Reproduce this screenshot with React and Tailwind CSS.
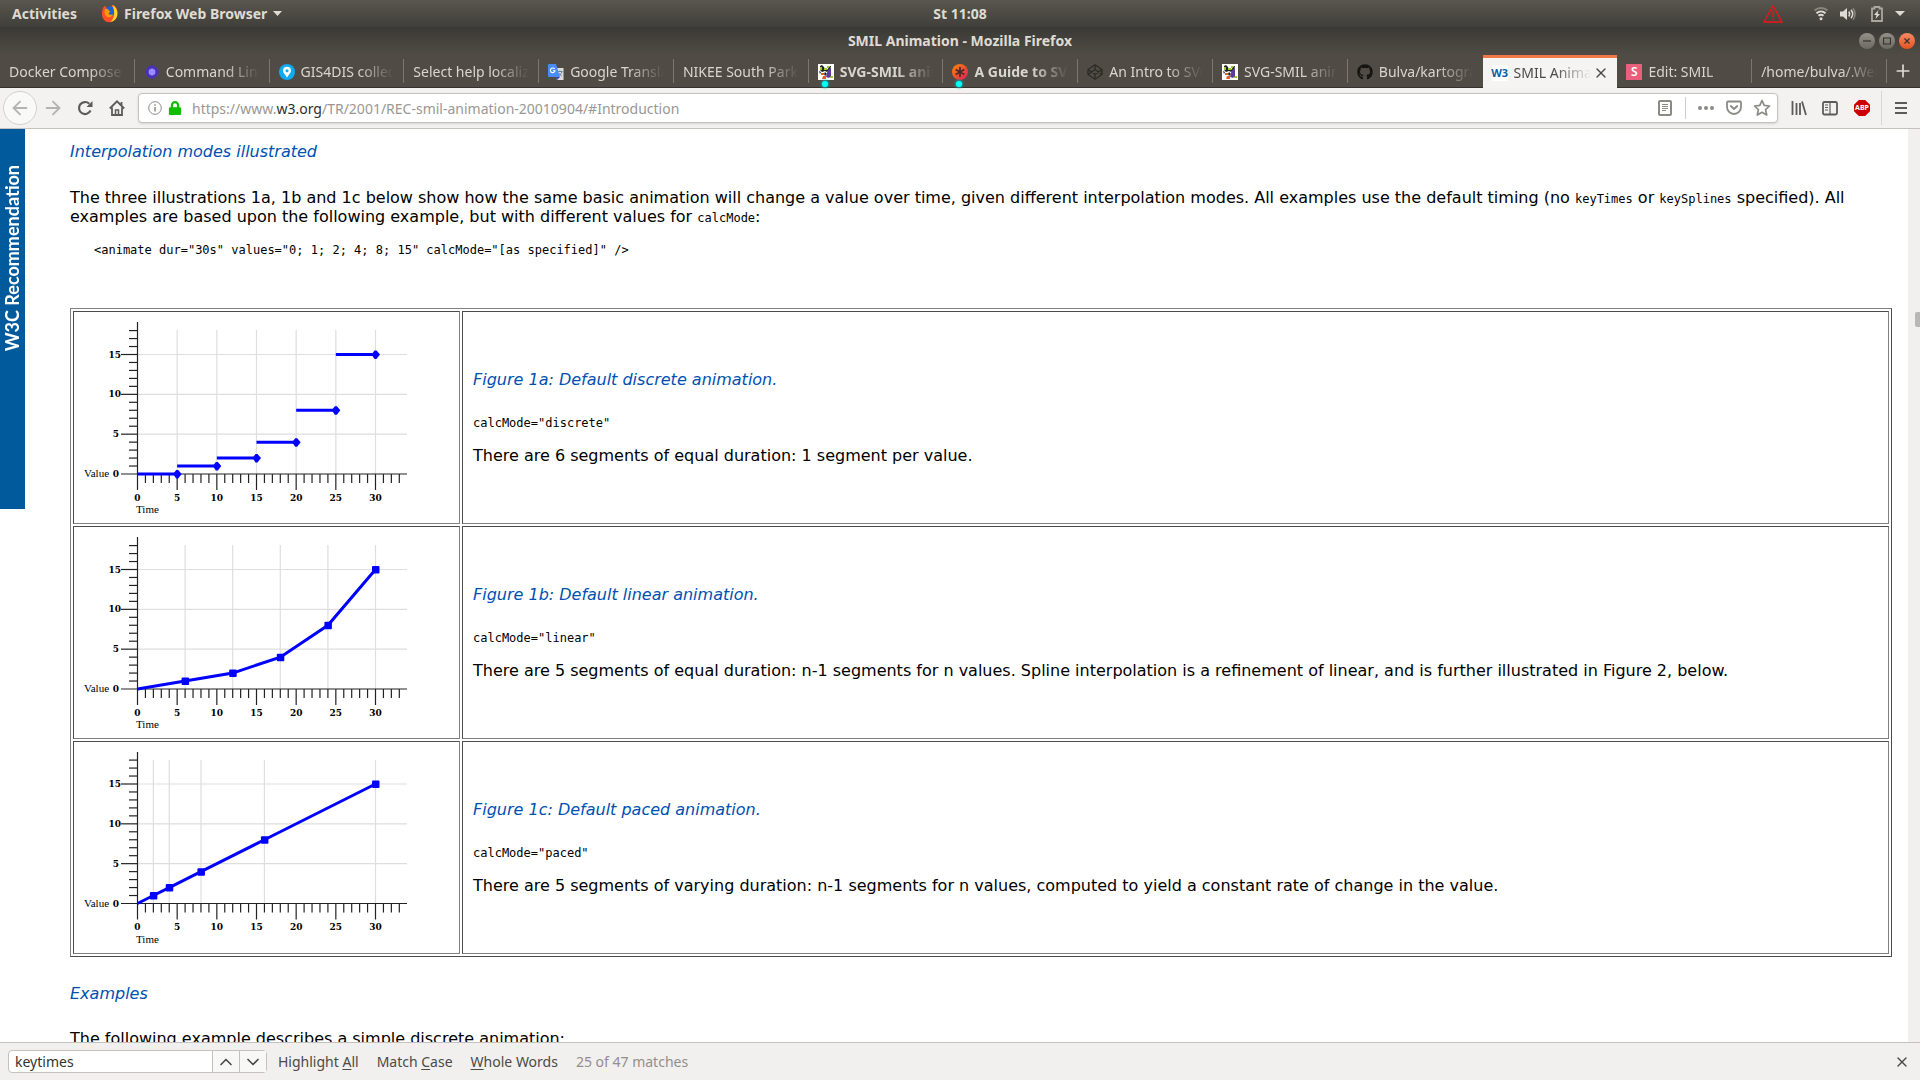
import { ArrowLeft, ArrowRight, ChevronDown, ChevronUp, Plus, X } from 'lucide-react'
import { FaGithub, FaLock } from 'react-icons/fa'

const TABS = [
  { title: 'Docker Compose up' },
  { title: 'Command Line', icon: 'hex' },
  { title: 'GIS4DIS collection', icon: 'pin' },
  { title: 'Select help localization' },
  { title: 'Google Translate', icon: 'translate' },
  { title: 'NIKEE South Park' },
  { title: 'SVG-SMIL animation', icon: 'parrot', unread: true },
  { title: 'A Guide to SVG', icon: 'star', unread: true },
  { title: 'An Intro to SVG', icon: 'codepen' },
  { title: 'SVG-SMIL animation', icon: 'parrot' },
  { title: 'Bulva/kartografie', icon: 'github' },
  { title: 'SMIL Animation', icon: 'w3', active: true },
  { title: 'Edit: SMIL', icon: 's' },
  { title: '/home/bulva/.WebStorm' },
]

const FIGURES = [
  {
    title: 'Figure 1a: Default discrete animation.',
    code: 'calcMode="discrete"',
    text: 'There are 6 segments of equal duration: 1 segment per value.',
    mode: 'discrete',
    grid: [5, 10, 15, 20, 25, 30],
    points: [[5, 0], [10, 1], [15, 2], [20, 4], [25, 8], [30, 15]],
  },
  {
    title: 'Figure 1b: Default linear animation.',
    code: 'calcMode="linear"',
    text: 'There are 5 segments of equal duration: n-1 segments for n values. Spline interpolation is a refinement of linear, and is further illustrated in Figure 2, below.',
    mode: 'linear',
    grid: [6, 12, 18, 24, 30],
    points: [[6, 1], [12, 2], [18, 4], [24, 8], [30, 15]],
  },
  {
    title: 'Figure 1c: Default paced animation.',
    code: 'calcMode="paced"',
    text: 'There are 5 segments of varying duration: n-1 segments for n values, computed to yield a constant rate of change in the value.',
    mode: 'paced',
    grid: [2, 4, 8, 16, 30],
    points: [[2, 1], [4, 2], [8, 4], [16, 8], [30, 15]],
  },
]

const range = (n) => Array.from({ length: n }, (_, i) => i)

const FirefoxLogo = () => (
  <svg width="17" height="19" viewBox="0 0 16 18">
    <path d="M1 7C1.500 4 2.500 2.500 4 1.500 4 3 5 3.500 6 4l6-3c2.500 2 3.700 5 3.500 8.500C15.200 14 12 17.200 8 17.200 3 17.200 0 12.500 1 7z" fill="#ff4f2a" />
    <circle cx="8.600" cy="7" r="4.800" fill="#1f5fd0" />
    <path d="M4 4.500c2 0 3 .6 3.500 1.800L9 7 7 9c1 1.500 3 1.500 4.500.5-1 2.500-3 3.500-5 3C3.500 11.500 2.500 7.500 4 4.500z" fill="#ff9a00" />
    <path d="M10.500 1c3.500 1.500 5.200 4.500 5 8.500-.3 4-2.800 6.700-6.500 7.500C13 13.500 13.500 6.500 10.500 1z" fill="#ffd42a" />
  </svg>
)

const TabIcon = ({ name }) => {
  switch (name) {
    case 'hex':
      return (
        <svg className="shrink-0" width="16" height="16" viewBox="0 0 16 16">
          <path d="M8 1l4.800 2.200L15 8l-2.200 4.800L8 15l-4.800-2.200L1 8l2.200-4.800z" fill="#4a32b4" />
          <path d="M8 4.300l3.200 1.800v3.800L8 11.700 4.800 9.900V6.100z" fill="#9b8cff" />
        </svg>
      )
    case 'pin':
      return (
        <svg className="shrink-0" width="16" height="16" viewBox="0 0 16 16">
          <circle cx="8" cy="8" r="8" fill="#0dabf2" />
          <path d="M8 2.800a4 4 0 0 1 4 4c0 2.400-2.700 4.200-4 7-1.300-2.800-4-4.600-4-7a4 4 0 0 1 4-4z" fill="#fff" />
          <circle cx="8" cy="6.700" r="1.500" fill="#0dabf2" />
        </svg>
      )
    case 'translate':
      return (
        <svg className="shrink-0" width="16" height="16" viewBox="0 0 16 16">
          <path d="M6 4h9.500v12H9z" fill="#dcdcdc" />
          <path d="M9.500 7.500h5M12 6.500v1M14 7.500c-.5 2-2 3.500-3.500 4.500M10.800 9c.7 1.300 1.800 2.300 3 3" fill="none" stroke="#607d8b" strokeWidth=".9" />
          <path d="M1 0h7l4 13H1a1 1 0 0 1-1-1V1a1 1 0 0 1 1-1z" fill="#4b8bf5" />
          <path d="M8 13h4l-3 3z" fill="#3440c0" />
          <path d="M6.600 5A2.300 2.300 0 1 0 7 6.700H4.900" fill="none" stroke="#fff" strokeWidth="1.100" />
        </svg>
      )
    case 'parrot':
      return (
        <svg className="shrink-0" width="16" height="16" viewBox="0 0 16 16">
          <rect width="16" height="16" fill="#fff" />
          <path d="M2 2l2-1 2 2 1 3 2 0 3-4h1l-1 4-3 2-2-1-3 1-2-2z" fill="#222" />
          <path d="M2 3h2v3H2zM6 4h3v2H6zM12 12h3v2h-3zM9 2h2v2H9z" fill="#9c3" />
          <path d="M3 9h3v2H3zM5 12h3v3H4z" fill="#e8601c" />
          <path d="M10 6l3-2v8l-2 2-3-1 1-4z" fill="#5b3c9c" />
          <path d="M7 8l2 2-2 2-1-2zM1 7l2 1-1 2z" fill="#222" />
        </svg>
      )
    case 'star':
      return (
        <svg className="shrink-0" width="16" height="16" viewBox="0 0 16 16">
          <defs>
            <linearGradient id="guide" x1="0" y1="0" x2="1" y2="1">
              <stop offset="0" stopColor="#ff8a00" />
              <stop offset="1" stopColor="#da1b60" />
            </linearGradient>
          </defs>
          <circle cx="8" cy="8" r="8" fill="url(#guide)" />
          <path d="M8 3v10M3.700 5.500l8.600 5M12.300 5.500l-8.600 5" stroke="#4a2a2a" strokeWidth="1.700" />
        </svg>
      )
    case 'codepen':
      return (
        <svg className="shrink-0" width="16" height="16" viewBox="0 0 16 16" fill="none" stroke="#2b2a27" strokeWidth="1.300">
          <path d="M8 .8l7 4.700v5L8 15.200l-7-4.700v-5zM8 .8v4.700M8 10.500v4.700M1 5.500l7 5 7-5M1 10.500l7-5 7 5" />
        </svg>
      )
    case 'github':
      return <FaGithub size={16} color="#161514" className="shrink-0" />
    case 'w3':
      return (
        <span className="flex h-4 w-4 shrink-0 items-center justify-center bg-white font-['Open_Sans'] text-[11px] font-bold leading-4 text-[#0b5fa5]">
          W3
        </span>
      )
    case 's':
      return (
        <span className="flex h-4 w-4 shrink-0 items-center justify-center bg-[#e8607c] text-xs font-semibold leading-4 text-white">
          S
        </span>
      )
    default:
      return null
  }
}

const Tab = ({ title, icon, active, unread, divider }) => (
  <div
    className={`relative flex min-w-0 flex-1 basis-0 items-center gap-1.5 pl-[9px] pr-2.5 ${
      active
        ? 'border-t-[3px] border-[#f07746] bg-[#f5f4f2] text-[#4b4a46]'
        : 'border-b border-[#33322e] pt-0.5 text-[#d9d6ce]'
    }`}
  >
    <TabIcon name={icon} />
    <button
      className={`min-w-0 flex-1 overflow-hidden whitespace-nowrap text-left [mask-image:linear-gradient(to_right,black_calc(100%-36px),transparent)] ${
        unread ? 'font-bold' : ''
      }`}
    >
      {title}
    </button>
    {active && (
      <button aria-label="Close tab" className="-mr-0.5 -ml-1">
        <X size={16} strokeWidth={2} />
      </button>
    )}
    {unread && (
      <span className="absolute bottom-0 left-[13px] h-1.5 w-1.5 rounded-full bg-[#0ff] shadow-[0_0_2px_1px_#1a9a9a]" />
    )}
    {divider && <span className="absolute right-0 top-1 h-6 w-px bg-[#7a776f]" />}
  </div>
)

const SystemBar = () => (
  <header className="grid h-[27px] grid-cols-3 items-center bg-linear-to-b from-[#5a564f] to-[#403f3a] px-3 font-bold text-[#dfdbd2]">
    <div className="flex items-center gap-6">
      <button>Activities</button>
      <button className="flex items-center gap-1.5">
        <FirefoxLogo />
        Firefox Web Browser
        <svg width="9" height="5" viewBox="0 0 9 5">
          <path d="M0 0h9L4.500 5z" fill="currentColor" />
        </svg>
      </button>
    </div>
    <div className="text-center">St 11:08</div>
    <div className="flex items-center justify-end">
      <svg className="mr-[30px]" width="20" height="18" viewBox="0 0 20 18" fill="none" stroke="#f01414" strokeWidth="1.300">
        <path d="M10 1l9 16H1zM10 6v6M10 13.500v1.500" />
      </svg>
      <svg className="mr-[11px]" width="16" height="15" viewBox="0 0 16 15" fill="none" stroke="#dfdbd2" strokeWidth="2">
        <path d="M1.500 4.500C5 1.200 11 1.200 14.500 4.500" opacity=".4" />
        <path d="M3.500 7.200c2.600-2.400 6.400-2.400 9 0M5.500 9.800c1.500-1.300 3.500-1.300 5 0" />
        <circle cx="8" cy="12.800" r="1.500" fill="#dfdbd2" stroke="none" />
      </svg>
      <svg className="mr-[15px]" width="16" height="14" viewBox="0 0 16 14" fill="none" stroke="#dfdbd2" strokeWidth="1.500">
        <path d="M0 4.500h3L7 1v12L3 9.500H0z" fill="#dfdbd2" stroke="none" />
        <path d="M8.800 4.500c1 1.500 1 3.500 0 5M11 2.800c2 2.500 2 6 0 8.400" />
        <path d="M13 1.300c2.500 3.500 2.500 8 0 11.400" opacity=".4" />
      </svg>
      <svg className="mr-3" width="12" height="16" viewBox="0 0 12 16">
        <path d="M1 2.500h2.500V1h5v1.500H11V15H1z" fill="none" stroke="#aaa79f" strokeWidth="1.800" />
        <path d="M7.500 4L3 9h2.500L4.500 13 9 8H6.500z" fill="#dfdbd2" />
      </svg>
      <svg className="mr-[3px]" width="10" height="5" viewBox="0 0 10 5">
        <path d="M0 0h10L5 5z" fill="#dfdbd2" />
      </svg>
    </div>
  </header>
)

const WindowButton = ({ label, close, children }) => (
  <button
    aria-label={label}
    className={`flex h-4 w-4 items-center justify-center rounded-full ${
      close ? 'bg-linear-to-b from-[#f58a62] to-[#e4521b]' : 'bg-linear-to-b from-[#94918a] to-[#6b6963]'
    }`}
  >
    <svg width="8" height="8" viewBox="0 0 8 8" fill="none" stroke="#33322e" strokeWidth="1.200">
      {children}
    </svg>
  </button>
)

const TitleBar = () => (
  <div className="grid h-7 grid-cols-[1fr_auto_1fr] items-center bg-linear-to-b from-[#3a3935] to-[#504c45] px-[5px] font-bold text-[#dfdbd2]">
    <span />
    <h1>SMIL Animation - Mozilla Firefox</h1>
    <div className="flex justify-end gap-1">
      <WindowButton label="Minimize">
        <path d="M0 4h8" />
      </WindowButton>
      <WindowButton label="Maximize">
        <path d="M.5 1h7v6h-7z" />
      </WindowButton>
      <WindowButton label="Close" close>
        <path d="M1.500 1.500l5 5M6.500 1.500l-5 5" />
      </WindowButton>
    </div>
  </div>
)

const TabStrip = () => (
  <div className="flex h-[33px] bg-[#504c45]">
    {TABS.map((tab, i) => (
      <Tab key={i} {...tab} divider={!tab.active && !TABS[i + 1]?.active} />
    ))}
    <button aria-label="New tab" className="flex w-[33px] items-center justify-center border-b border-[#33322e] text-[#dfdbd2]">
      <Plus size={20} strokeWidth={2} />
    </button>
  </div>
)

const Toolbar = () => (
  <nav className="flex h-[41px] items-center border-b border-[#c5c1bc] bg-[#f3f2f0] pl-[3px] text-[#5c5b57]">
    <button aria-label="Back" className="flex h-[34px] w-[34px] items-center justify-center rounded-full border border-[#d3d1cd] bg-[#f9f9f8] text-[#b4b3b0]">
      <ArrowLeft size={22} />
    </button>
    <button aria-label="Forward" className="flex w-8 justify-center text-[#b4b3b0]">
      <ArrowRight size={22} />
    </button>
    <button aria-label="Reload" className="flex w-8 justify-center">
      <svg width="16" height="16" viewBox="0 0 16 16" fill="none" stroke="currentColor" strokeWidth="2.200">
        <path d="M13.500 10.500A6 6 0 1 1 12.300 3.800" />
        <path d="M15.500 1v6h-6z" fill="currentColor" stroke="none" />
      </svg>
    </button>
    <button aria-label="Home" className="flex w-8 justify-center">
      <svg width="16" height="16" viewBox="0 0 16 16" fill="none" stroke="currentColor" strokeWidth="1.800">
        <path d="M.8 8.500L8 1.300l7.200 7.200M3 7.500V15h10V7.500M12.500 2v3" />
        <path d="M6.500 15v-5h3v5" strokeWidth="1.500" />
      </svg>
    </button>
    <div className="ml-[5px] flex h-[30px] flex-1 items-center rounded-sm border border-[#c5c1bc] bg-white text-[#8b8a87] shadow-sm">
      <svg className="ml-[9px]" width="14" height="14" viewBox="0 0 14 14" fill="none" stroke="currentColor">
        <circle cx="7" cy="7" r="6.300" />
        <path d="M7 6v4.500M7 3.300v1.500" strokeWidth="1.500" />
      </svg>
      <FaLock className="ml-1.5" size={14} color="#12bc00" />
      <a href="#Introduction" className="ml-2.5 pt-0.5 text-[#999894]">
        https://www.<span className="text-[#2e2d2b]">w3.org</span>/TR/2001/REC-smil-animation-20010904/#Introduction
      </a>
      <div className="ml-auto flex items-center">
        <button aria-label="Reader view" className="mr-[13px]">
          <svg width="14" height="16" viewBox="0 0 14 16" fill="none" stroke="currentColor">
            <rect x="1" y="1" width="12" height="14" rx="1" strokeWidth="2" />
            <path d="M4 4.500h6M4 6.500h6M4 8.500h6M4 10.500h4" />
          </svg>
        </button>
        <span className="h-[22px] w-px bg-[#d0cecb]" />
        <button aria-label="Page actions" className="ml-3">
          <svg width="16" height="4" viewBox="0 0 16 4" fill="currentColor">
            <circle cx="2" cy="2" r="2" />
            <circle cx="8" cy="2" r="2" />
            <circle cx="14" cy="2" r="2" />
          </svg>
        </button>
        <button aria-label="Save to Pocket" className="ml-3">
          <svg width="16" height="16" viewBox="0 0 16 16" fill="none" stroke="currentColor" strokeWidth="1.800" strokeLinecap="round" strokeLinejoin="round">
            <path d="M2 1.500h12a1 1 0 0 1 1 1V7A7 7 0 0 1 1 7V2.500a1 1 0 0 1 1-1z" />
            <path d="M4.800 6L8 9l3.200-3" />
          </svg>
        </button>
        <button aria-label="Bookmark this page" className="ml-[11px] mr-1.5">
          <svg width="18" height="18" viewBox="0 0 18 18" fill="none" stroke="currentColor" strokeWidth="1.700" strokeLinejoin="round">
            <path d="M9 1.500l2.200 4.900 5.300.6-3.900 3.600 1.100 5.400L9 13.300 4.300 16l1.100-5.400L1.500 7l5.300-.6z" />
          </svg>
        </button>
      </div>
    </div>
    <button aria-label="Library" className="flex w-10 justify-center pl-0.5">
      <svg width="16" height="16" viewBox="0 0 16 16" fill="none" stroke="currentColor" strokeWidth="1.800">
        <path d="M1.500 1v14M5.500 3v12M9 3v12M11 1.500l4 13.500" />
      </svg>
    </button>
    <button aria-label="Sidebars" className="flex w-6 justify-center">
      <svg width="16" height="16" viewBox="0 0 16 16" fill="none" stroke="currentColor" strokeWidth="1.800">
        <rect x="1" y="2" width="14" height="12.500" rx="1.500" />
        <path d="M8 2v12M3 5h3M3 7.500h3M3 10h3" strokeWidth="1.200" />
      </svg>
    </button>
    <button aria-label="Adblock Plus" className="ml-3 flex h-4 w-4 items-center justify-center bg-[#cc0000] text-[7px] font-bold leading-4 text-white [clip-path:polygon(30%_0,70%_0,100%_30%,100%_70%,70%_100%,30%_100%,0_70%,0_30%)]">
      ABP
    </button>
    <span className="ml-[11px] h-[34px] w-px bg-[#d8d6d3]" />
    <button aria-label="Menu" className="flex w-[38px] justify-center">
      <svg width="12" height="12" viewBox="0 0 12 12" stroke="currentColor" strokeWidth="2">
        <path d="M0 1h12M0 6h12M0 11h12" />
      </svg>
    </button>
  </nav>
)

// Plot origin and scale inside the 365x191 figure
const X0 = 53.5
const px = (t) => X0 + (t * 238) / 30

const Chart = ({ title, mode, grid, points }) => {
  const y0 = mode === 'paced' ? 151.5 : 152
  const py = (v) => y0 - (v * 119.5) / 15

  return (
    <svg width="365" height="191" viewBox="0 0 365 191" role="img" aria-label={title}>
      <g stroke="#dedede" strokeWidth="1.200">
        {grid.map((t) => (
          <path key={t} d={`M${px(t)} 8V${y0}`} />
        ))}
        {[5, 10, 15].map((v) => (
          <path key={v} d={`M${X0} ${py(v)}H323`} />
        ))}
      </g>
      <g stroke="#222" strokeWidth="1.200">
        <path d={`M${X0} 0V${y0 + 16}M37 ${y0}H323`} />
        {range(18).map((i) => (
          <path key={i} d={`M${(i + 1) % 5 ? 45 : 37} ${py(i + 1)}H${X0}`} />
        ))}
        {range(33).map((i) => (
          <path key={i} d={`M${px(i + 1)} ${y0}v${(i + 1) % 5 ? 9 : 16}`} />
        ))}
      </g>
      <g fill="#000" className="font-['DejaVu_Serif'] text-[9px] font-bold">
        {[0, 5, 10, 15].map((v) => (
          <text key={v} x={v < 10 ? 35 : 37} y={py(v) + 3} textAnchor="end">
            {v}
          </text>
        ))}
        {[0, 5, 10, 15, 20, 25, 30].map((t) => (
          <text key={t} x={px(t)} y={y0 + 26.5} textAnchor="middle">
            {t}
          </text>
        ))}
      </g>
      <g fill="#000" className="font-['Liberation_Serif'] text-[11px]">
        <text x="0" y={y0 + 3}>Value</text>
        <text x="52" y={y0 + 39}>Time</text>
      </g>
      <g stroke="#00f" strokeWidth="3" fill="none">
        {mode === 'discrete' ? (
          points.map(([t, v]) => <path key={t} d={`M${px(t - 5)} ${py(v)}H${px(t)}`} />)
        ) : (
          <path d={`M${X0} ${y0}${points.map(([t, v]) => `L${px(t)} ${py(v)}`).join('')}`} />
        )}
      </g>
      <g fill="#00f">
        {points.map(([t, v]) =>
          mode === 'discrete' ? (
            <path key={t} d={`M${px(t) - 1} ${py(v) - 4}h2l3.500 4-3.500 4.500h-2l-3-4.500z`} />
          ) : (
            <rect key={t} x={px(t) - 3.5} y={py(v) - 3.5} width="7.500" height="7.500" rx="1" />
          )
        )}
      </g>
    </svg>
  )
}

const Heading = ({ children }) => <h2 className="italic text-[#0050b2]">{children}</h2>

const Code = ({ children }) => (
  <code className="font-['DejaVu_Sans_Mono',monospace] text-xs leading-[14px]">{children}</code>
)

const Page = () => (
  <div className="flex min-h-0 flex-1 bg-white">
    <aside className="flex h-[380px] w-[25px] shrink-0 items-start justify-center bg-[#005a9c] pt-9">
      <span className="rotate-180 whitespace-nowrap font-['Lato',sans-serif] text-lg font-bold leading-[25px] text-white [writing-mode:vertical-rl]">
        W3C Recommendation
      </span>
    </aside>
    <main className="min-w-0 flex-1 overflow-hidden pl-[45px] pr-4 pt-[13px] font-['DejaVu_Sans',sans-serif] text-base leading-[19px] text-black">
      <Heading>Interpolation modes illustrated</Heading>
      <p className="mt-[27px]">
        The three illustrations 1a, 1b and 1c below show how the same basic animation will change a value over time,
        given different interpolation modes. All examples use the default timing (no <Code>keyTimes</Code> or{' '}
        <Code>keySplines</Code> specified). All examples are based upon the following example, but with different
        values for <Code>calcMode</Code>:
      </p>
      <pre className="ml-6 mt-[17px] font-['DejaVu_Sans_Mono',monospace] text-xs leading-[14px]">
        {'<animate dur="30s" values="0; 1; 2; 4; 8; 15" calcMode="[as specified]" />'}
      </pre>
      <table className="mt-[51px] w-full border-separate border-spacing-[2px] border border-b-[#4c4c4e] border-l-[#808082] border-r-[#4c4c4e] border-t-[#808082]">
        <tbody>
          {FIGURES.map((fig) => (
            <tr key={fig.mode}>
              <td className="w-[387px] border border-b-[#808082] border-l-[#4c4c4e] border-r-[#808082] border-t-[#4c4c4e] p-2.5">
                <Chart {...fig} />
              </td>
              <td className="border border-b-[#808082] border-l-[#4c4c4e] border-r-[#808082] border-t-[#4c4c4e] p-2.5 align-middle">
                <Heading>{fig.title}</Heading>
                <pre className="mt-[27px] font-['DejaVu_Sans_Mono',monospace] text-xs leading-[14px]">{fig.code}</pre>
                <p className="mt-4">{fig.text}</p>
              </td>
            </tr>
          ))}
        </tbody>
      </table>
      <div className="mt-[27px]">
        <Heading>Examples</Heading>
        <p className="mt-[26px]">The following example describes a simple discrete animation:</p>
      </div>
    </main>
    <div className="w-3 shrink-0 bg-[#f1f0ee] pt-[183px]">
      <div className="ml-auto h-[15px] w-[5px] rounded-l-xs bg-[#b8b7b5]" />
    </div>
  </div>
)

const FindBar = () => (
  <footer className="flex h-[38px] items-center border-t border-[#c5c1bc] bg-[#f1f0ee] px-2 text-[#4b4a46]">
    <div className="flex h-[23px] rounded-sm border border-[#c5c1bc] bg-white">
      <input aria-label="Find in page" defaultValue="keytimes" className="w-[203px] px-1.5 text-[#33322e] outline-none" />
      <button aria-label="Previous match" className="flex w-[27px] items-center justify-center border-l border-[#c5c1bc] bg-[#f8f8f7]">
        <ChevronUp size={20} strokeWidth={2} />
      </button>
      <button aria-label="Next match" className="flex w-[27px] items-center justify-center border-l border-[#c5c1bc] bg-[#f8f8f7]">
        <ChevronDown size={20} strokeWidth={2} />
      </button>
    </div>
    <div className="ml-[11px] flex items-center gap-[18px]">
      <button>
        Highlight <u className="underline-offset-2">A</u>ll
      </button>
      <button>
        Match <u className="underline-offset-2">C</u>ase
      </button>
      <button>
        <u className="underline-offset-2">W</u>hole Words
      </button>
      <span className="text-[#918f8a]">25 of 47 matches</span>
    </div>
    <button aria-label="Close find bar" className="ml-auto mr-0.5">
      <X size={16} strokeWidth={2} />
    </button>
  </footer>
)

const App = () => (
  <div className="flex h-screen flex-col overflow-hidden font-['Noto_Sans',sans-serif] text-sm leading-5">
    <SystemBar />
    <TitleBar />
    <TabStrip />
    <Toolbar />
    <Page />
    <FindBar />
  </div>
)

export default App
